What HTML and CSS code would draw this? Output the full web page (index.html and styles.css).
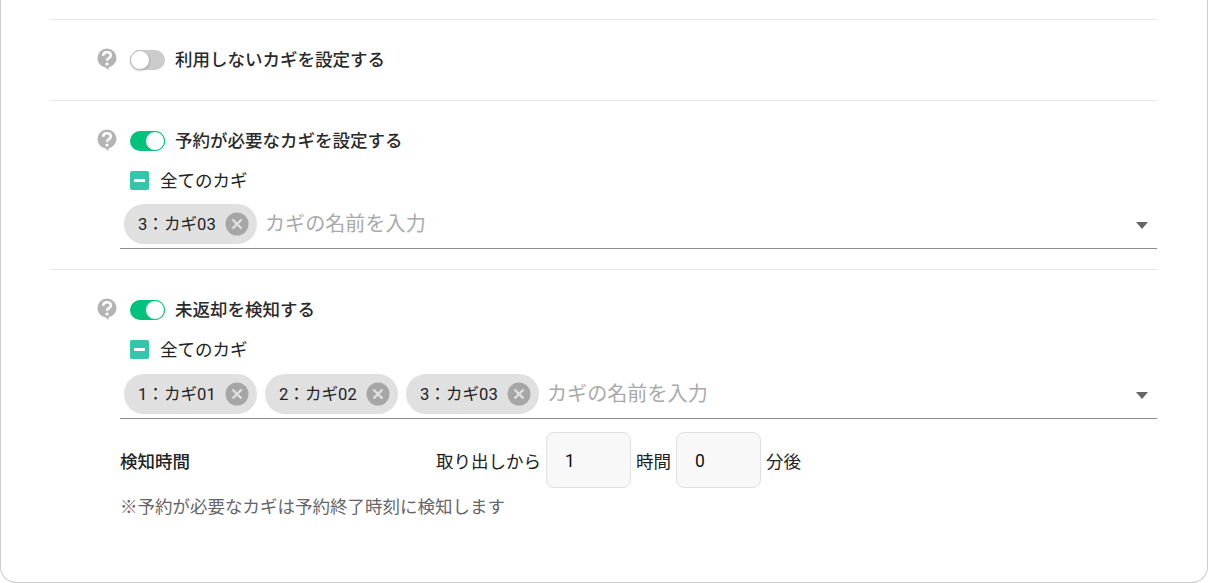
FILE: index.html
```html
<!DOCTYPE html>
<html lang="ja">

<head>
    <meta charset="UTF-8">
    <meta name="viewport" content="width=device-width, initial-scale=1.0">
    <title>カギの設定</title>
    <link rel="stylesheet" href="styles.css">
</head>

<body>
    <!-- Shared icons -->
    <svg class="icon-defs">
        <symbol id="icon-help" viewBox="0 0 20 22">
            <path d="M10 .5a9.500 9.500 0 0 0-9.500 9.500c0 4.800 3.500 8.700 8.200 9.400l1.900 2.200c.3.300.6.200.7-.2l.6-2.200c4.100-1 7.600-4.800 7.600-9.200A9.500 9.500 0 0 0 10 .5z" fill="#b4b4b4"/>
            <path d="M6.200 7.800c0-2.300 1.700-3.500 3.800-3.500s3.800 1.200 3.800 3.200c0 2.800-3.800 2.500-3.800 5.300" fill="none" stroke="#fff" stroke-width="2.500"/>
            <circle cx="10" cy="16" r="1.600" fill="#fff"/>
        </symbol>
        <symbol id="icon-close" viewBox="0 0 24 24">
            <circle cx="12" cy="12" r="11.500" fill="#a6a6a6"/>
            <path d="M7.500 7.500l9 9M16.500 7.500l-9 9" stroke="#e0e0e0" stroke-width="2.400" fill="none"/>
        </symbol>
    </svg>

    <main class="card">

        <!-- Unused keys -->
        <section class="section">
            <div class="setting-row">
                <svg class="help-icon"><use href="#icon-help"/></svg>
                <span class="toggle"><span class="toggle-knob"></span></span>
                <span class="setting-label">利用しないカギを設定する</span>
            </div>
        </section>

        <!-- Keys that need a reservation -->
        <section class="section section-keys">
            <div class="setting-row">
                <svg class="help-icon"><use href="#icon-help"/></svg>
                <span class="toggle toggle-on"><span class="toggle-knob"></span></span>
                <span class="setting-label">予約が必要なカギを設定する</span>
            </div>
            <div class="check-row">
                <span class="check-box"><span class="check-minus"></span></span>
                <span class="check-label">全てのカギ</span>
            </div>
            <div class="key-select">
                <span class="chip">
                    <span class="chip-text">3：カギ03</span>
                    <svg class="chip-close"><use href="#icon-close"/></svg>
                </span>
                <input class="key-input" type="text" placeholder="カギの名前を入力">
                <span class="select-arrow"></span>
            </div>
        </section>

        <!-- Keys not returned -->
        <section class="section section-keys section-last">
            <div class="setting-row">
                <svg class="help-icon"><use href="#icon-help"/></svg>
                <span class="toggle toggle-on"><span class="toggle-knob"></span></span>
                <span class="setting-label">未返却を検知する</span>
            </div>
            <div class="check-row">
                <span class="check-box"><span class="check-minus"></span></span>
                <span class="check-label">全てのカギ</span>
            </div>
            <div class="key-select key-select-low">
                <span class="chip">
                    <span class="chip-text">1：カギ01</span>
                    <svg class="chip-close"><use href="#icon-close"/></svg>
                </span>
                <span class="chip">
                    <span class="chip-text">2：カギ02</span>
                    <svg class="chip-close"><use href="#icon-close"/></svg>
                </span>
                <span class="chip">
                    <span class="chip-text">3：カギ03</span>
                    <svg class="chip-close"><use href="#icon-close"/></svg>
                </span>
                <input class="key-input" type="text" placeholder="カギの名前を入力">
                <span class="select-arrow"></span>
            </div>
            <div class="time-row">
                <span class="time-text time-label">検知時間</span>
                <span class="time-text">取り出しから</span>
                <input class="time-input" type="text" value="1">
                <span class="time-text">時間</span>
                <input class="time-input" type="text" value="0">
                <span class="time-text">分後</span>
            </div>
            <p class="time-note">※予約が必要なカギは予約終了時刻に検知します</p>
        </section>

    </main>
</body>

</html>
```

FILE: styles.css
```css
/* Basic layout */
body {
    margin: 0;
    height: 583px;
    overflow: hidden;
    background-color: #fff;
    color: #222;
    font-family: Roboto, "Noto Sans CJK JP", sans-serif;
    font-size: 17.5px;
}

.icon-defs {
    display: none;
}

.card {
    box-sizing: border-box;
    height: 583px;
    padding: 19px 50px 0 49px;
    border: 1px solid #ccc;
    border-top: none;
    border-radius: 0 0 16px 16px;
}

.section {
    border-top: 1px solid #e6e6e6;
    padding: 28px 0;
}

.section-keys {
    padding-bottom: 20px;
}

.section-last {
    padding-bottom: 0;
}

/* Toggle rows */
.setting-row {
    display: flex;
    align-items: center;
    height: 24px;
    padding-left: 47px;
}

.help-icon {
    width: 20px;
    height: 22px;
    margin-right: 13px;
    margin-top: -3px;
}

.setting-label {
    margin-left: 10px;
    padding-bottom: 4px;
    font-weight: 500;
    color: #2a2a2a;
}

.toggle {
    display: flex;
    box-sizing: border-box;
    width: 35px;
    height: 20px;
    border-radius: 10px;
    background-color: #ccc;
}

.toggle-on {
    justify-content: flex-end;
    background-color: #00c27c;
}

.toggle-knob {
    box-sizing: border-box;
    width: 20px;
    height: 20px;
    border-radius: 50%;
    background-color: #fff;
    border: 1px solid #bbb;
    box-shadow: 0 1px 2px rgba(0, 0, 0, 0.2);
}

.toggle-on .toggle-knob {
    border-color: #00c27c;
    box-shadow: none;
}

/* Select all */
.check-row {
    display: flex;
    align-items: center;
    height: 24px;
    margin-top: 15px;
    padding-left: 80px;
    gap: 11px;
}

.check-label {
    padding-bottom: 2px;
}

.check-box {
    display: flex;
    align-items: center;
    justify-content: center;
    width: 19px;
    height: 19px;
    border-radius: 2px;
    background-color: #32c6aa;
}

.check-minus {
    width: 11px;
    height: 3px;
    background-color: #fff;
}

/* Key select */
.key-select {
    display: flex;
    align-items: center;
    gap: 8px;
    margin: 8px 0 0 70px;
    padding: 4px 0 4px 4px;
    border-bottom: 1px solid #8c8c8c;
}

.key-select-low {
    margin-top: 9px;
}

.chip {
    display: flex;
    align-items: center;
    justify-content: space-between;
    box-sizing: border-box;
    width: 133px;
    height: 40px;
    padding: 0 8px 0 14px;
    border-radius: 20px;
    background-color: #e0e0e0;
    font-size: 16.6px;
}

.chip-text {
    padding-bottom: 3px;
    white-space: nowrap;
    text-spacing-trim: space-all;
}

.chip-close {
    width: 24px;
    height: 24px;
}

.key-input {
    flex: 1;
    min-width: 0;
    height: 40px;
    padding: 0;
    border: none;
    outline: none;
    background: none;
    font-family: inherit;
    font-size: 20.100px;
}

.key-input::placeholder {
    color: #aaa;
}

.select-arrow {
    width: 0;
    height: 0;
    margin: 3px 9px 0 0;
    border-left: 6px solid transparent;
    border-right: 6px solid transparent;
    border-top: 7px solid #666;
}

/* Detect time */
.time-row {
    display: flex;
    align-items: center;
    gap: 5px;
    margin: 13px 0 0 70px;
}

.time-text {
    padding-top: 1px;
}

.time-label {
    width: 311px;
    font-weight: 500;
}

.time-input {
    box-sizing: border-box;
    width: 85px;
    height: 56px;
    padding: 1px 0 0 18px;
    border: 1px solid #e0e0e0;
    border-radius: 8px;
    background-color: #f8f8f8;
    font-family: inherit;
    font-size: 17.5px;
    color: #111;
    outline: none;
}

.time-note {
    margin: 7px 0 0 70px;
    line-height: 24px;
    font-size: 17.5px;
    color: #666;
}
```
